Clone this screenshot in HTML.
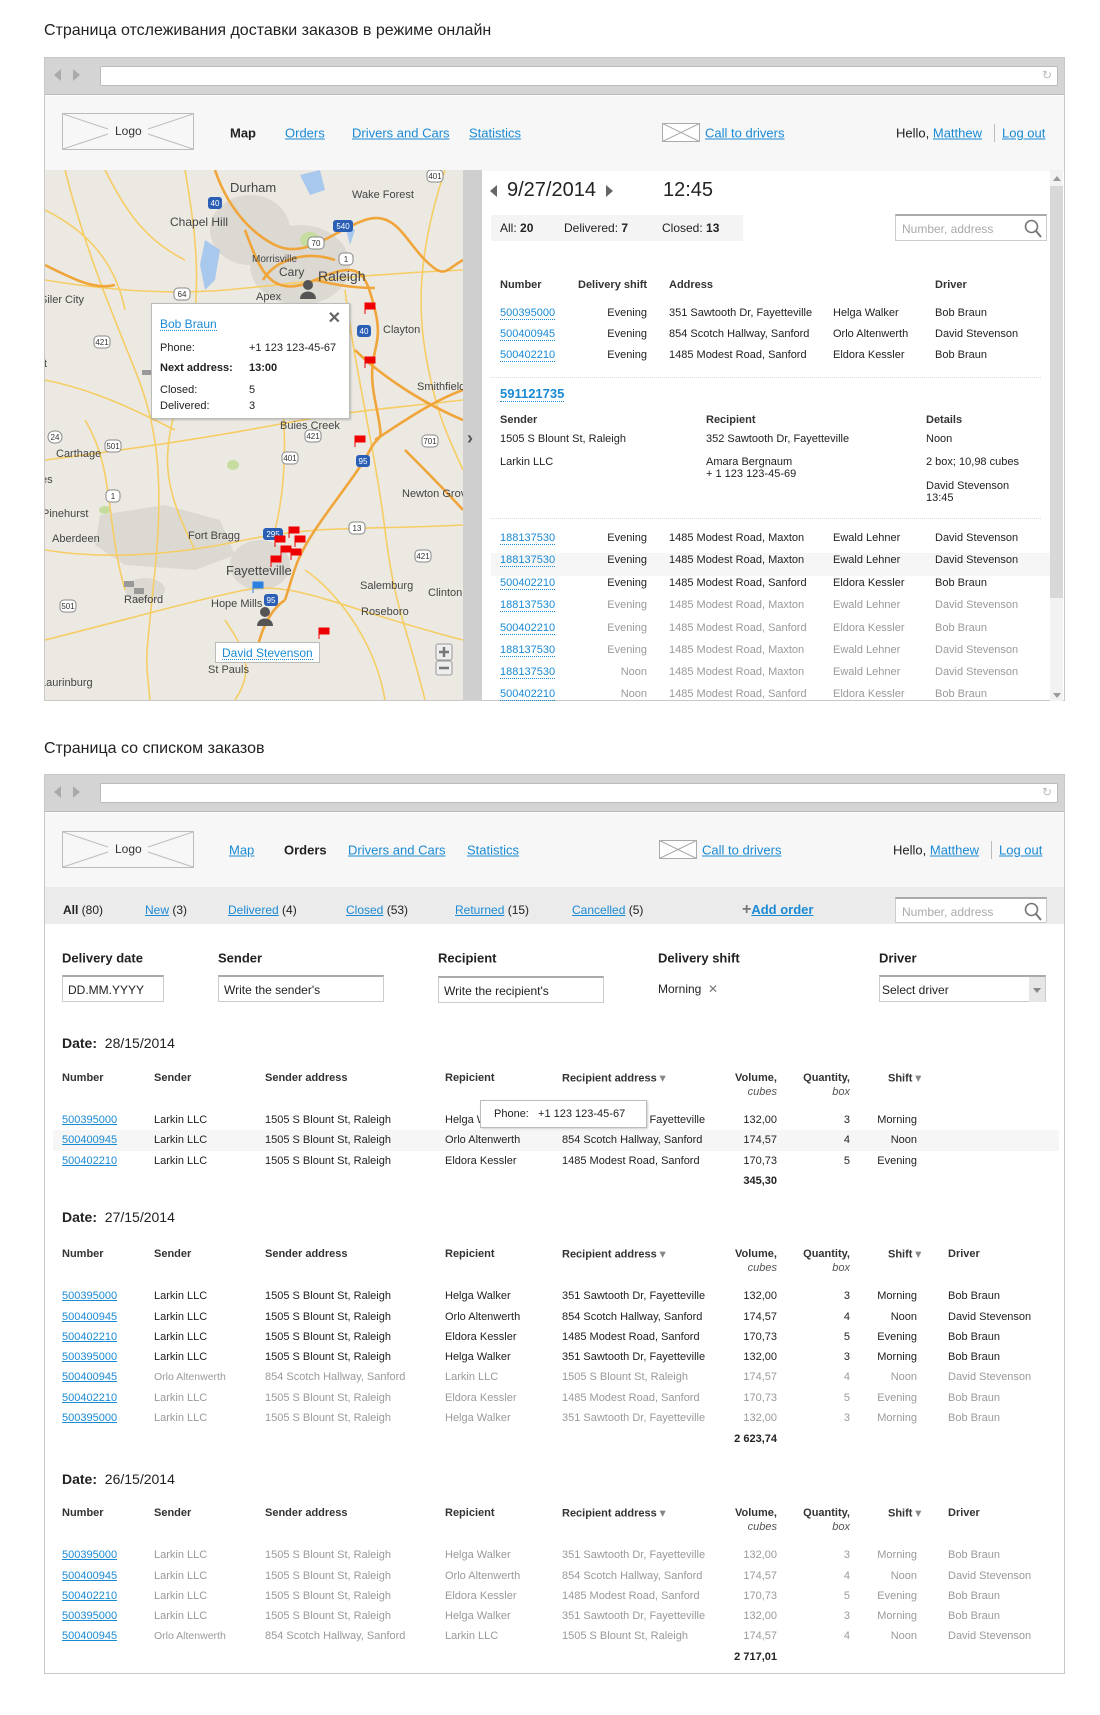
<!DOCTYPE html>
<html><head><meta charset="utf-8">
<style>
*{margin:0;padding:0;box-sizing:border-box}
body{width:1100px;height:1715px;background:#fff;font-family:"Liberation Sans","Noto Sans CJK SC",sans-serif;color:#222;position:relative;overflow:hidden;font-size:12px}
.a{position:absolute;white-space:nowrap}
a,.lk{color:#1a8ad4;text-decoration:underline}
.dl{color:#1a8ad4;text-decoration:none;border-bottom:1px dotted #1a8ad4;line-height:12px}
.frame{position:absolute;left:44px;width:1021px;border:1px solid #c8c8c8;background:#fff}
.tb{position:absolute;left:0;top:0;right:0;height:37px;background:#d4d4d4;border-bottom:1px solid #bbb}
.url{position:absolute;left:55px;right:6px;top:8px;height:20px;background:#fff;border:1px solid #bbb;border-radius:2px}
.hdr{position:absolute;left:0;right:0;background:#f7f7f7}
.logo{position:absolute;width:132px;height:37px;border:1px solid #bbb;background:#f7f7f7}
.nav{font-size:13px;transform:translateY(-50%)}
.g{color:#9a9a9a}
.b{font-weight:bold}
.h{font-weight:bold;font-size:11px;color:#333}
.r{text-align:right}
.mid{transform:translateY(-50%)}
</style></head><body>

<div class="a" style="left:44px;top:22px;font-size:16px">Страница отслеживания доставки заказов в режиме онлайн</div>

<div class="frame" style="top:57px;height:644px">
  <div class="tb"><div class="a" style="left:9px;top:11px;width:0;height:0;border:6px solid transparent;border-right:7px solid #aaa;border-left:0"></div><div class="a" style="left:28px;top:11px;width:0;height:0;border:6px solid transparent;border-left:7px solid #aaa;border-right:0"></div><div class="url"><span class="a" style="right:5px;top:1px;color:#bbb;font-size:12px">↻</span></div></div>
  <div class="hdr" style="top:38px;height:75px"></div>
</div>
<div class="logo" style="left:62px;top:113px">
<svg width="130" height="35" style="position:absolute;left:0;top:0"><path d="M0 0L45 15M130 0L85 15M0 35L45 20M130 35L85 20" stroke="#bbb" fill="none"/></svg>
<span class="a" style="left:52px;top:10px;font-size:12px;color:#333">Logo</span></div>
<div class="a nav b" style="left:230px;top:133px">Map</div>
<div class="a nav lk" style="left:285px;top:133px">Orders</div>
<div class="a nav lk" style="left:352px;top:133px">Drivers and Cars</div>
<div class="a nav lk" style="left:469px;top:133px">Statistics</div>
<svg class="a" style="left:662px;top:123px" width="38" height="19"><rect x=".5" y=".5" width="37" height="18" fill="#fff" stroke="#aaa"/><path d="M.5 .5L37.5 18.5M37.5 .5L.5 18.5" stroke="#aaa"/></svg>
<div class="a nav lk" style="left:705px;top:133px">Call to drivers</div>
<div class="a nav" style="left:896px;top:133px">Hello, <span class="lk">Matthew</span></div>
<div class="a" style="left:994px;top:124px;width:1px;height:18px;background:#bbb"></div>
<div class="a nav lk" style="left:1002px;top:133px">Log out</div>

<div class="a" style="left:45px;top:170px;width:418px;height:530px;overflow:hidden;background:#ece9e2">
<svg width="418" height="530" viewBox="0 0 418 530">
<g fill="#dcd9d2"><ellipse cx="205" cy="60" rx="40" ry="35"/><ellipse cx="255" cy="95" rx="50" ry="40"/><path d="M55 345L120 335L175 350L190 385L150 400L80 395L50 375Z"/><ellipse cx="215" cy="395" rx="30" ry="25"/><ellipse cx="100" cy="420" rx="20" ry="12"/></g>
<g fill="#c6dd9f"><ellipse cx="265" cy="70" rx="10" ry="8"/><ellipse cx="188" cy="295" rx="6" ry="5"/><ellipse cx="60" cy="340" rx="6" ry="4"/></g>
<g fill="#a9c8ee"><path d="M160 70L175 80L170 110L160 120L155 95Z"/><path d="M255 5L275 0L280 20L265 25Z"/><path d="M300 55L310 60L305 75Z"/></g>
<g fill="none" stroke="#f5cd64" stroke-width="1.6">
<path d="M0 110C60 120 120 125 180 120S300 105 418 100"/><path d="M20 0C40 80 70 150 90 200S120 300 110 400S100 480 105 530"/><path d="M0 290C80 280 150 270 230 255S330 240 418 230"/><path d="M140 0C150 60 160 120 140 200S110 300 150 380"/><path d="M0 380C60 390 130 385 200 370S320 360 418 355"/><path d="M0 470C80 450 150 430 200 420S300 440 418 470"/><path d="M300 120C310 200 330 280 340 360S360 450 380 530"/><path d="M230 180C240 230 245 300 230 360"/><path d="M60 0C80 40 100 70 140 90"/><path d="M400 0C380 60 370 120 380 180S400 260 418 300"/><path d="M180 450C200 480 210 500 190 530"/><path d="M0 210C50 220 90 240 130 260"/><path d="M0 40C40 60 70 90 80 140"/><path d="M160 200C200 210 240 220 280 200"/><path d="M40 250C70 300 60 350 80 420"/><path d="M260 400C290 420 330 470 340 530"/></g>
<g fill="none" stroke="#f0a53a" stroke-width="2.6">
<path d="M170 0C180 30 200 60 230 75S290 60 320 50S360 70 380 90S400 100 418 90"/><path d="M200 60C215 100 225 130 270 110S320 100 330 140S320 180 330 230S335 260 325 280S290 330 270 360S250 400 240 430"/><path d="M330 270C360 250 390 230 418 220"/><path d="M218 110C230 90 260 80 290 90"/><path d="M270 110C290 115 310 118 330 118"/><path d="M0 95C30 110 50 120 70 115"/><path d="M240 430C225 440 215 460 210 490"/><path d="M360 280C380 300 400 320 418 340"/><path d="M310 180C330 200 370 230 418 250"/><path d="M180 140C195 150 215 160 240 160"/></g>
<g font-family="Liberation Sans,sans-serif" fill="#444" font-size="11">
<text x="185" y="22" font-size="13">Durham</text><text x="307" y="28">Wake Forest</text><text x="125" y="56" font-size="12">Chapel Hill</text><text x="207" y="92" font-size="10">Morrisville</text><text x="234" y="106" font-size="12">Cary</text><text x="273" y="111" font-size="14">Raleigh</text><text x="211" y="130">Apex</text><text x="-5" y="133">Siler City</text><text x="338" y="163">Clayton</text><text x="372" y="220">Smithfield</text><text x="235" y="259">Buies Creek</text><text x="11" y="287">Carthage</text><text x="357" y="327">Newton Grove</text><text x="-3" y="347">Pinehurst</text><text x="7" y="372">Aberdeen</text><text x="143" y="369">Fort Bragg</text><text x="181" y="405" font-size="13">Fayetteville</text><text x="315" y="419">Salemburg</text><text x="383" y="426">Clinton</text><text x="79" y="433">Raeford</text><text x="166" y="437">Hope Mills</text><text x="316" y="445">Roseboro</text><text x="163" y="503">St Pauls</text><text x="-5" y="516">Laurinburg</text><text x="-4" y="313">es</text><text x="-4" y="197">tt</text>
</g>
<g font-family="Liberation Sans,sans-serif" font-size="8" text-anchor="middle">
<g fill="#fff" stroke="#888"><rect x="129" y="118" width="16" height="12" rx="4"/><rect x="49" y="166" width="16" height="12" rx="4"/><rect x="3" y="261" width="14" height="12" rx="6"/><rect x="60" y="270" width="16" height="12" rx="4"/><rect x="260" y="260" width="16" height="12" rx="4"/><rect x="237" y="282" width="16" height="12" rx="4"/><rect x="377" y="265" width="16" height="12" rx="4"/><rect x="61" y="320" width="14" height="12" rx="4"/><rect x="304" y="352" width="16" height="12" rx="4"/><rect x="370" y="380" width="16" height="12" rx="4"/><rect x="15" y="430" width="16" height="12" rx="4"/><rect x="382" y="0" width="16" height="12" rx="4"/><rect x="263" y="67" width="16" height="12" rx="4"/><rect x="294" y="83" width="14" height="12" rx="4"/></g>
<g fill="#333"><text x="137" y="127">64</text><text x="57" y="175">421</text><text x="10" y="270">24</text><text x="68" y="279">501</text><text x="268" y="269">421</text><text x="245" y="291">401</text><text x="385" y="274">701</text><text x="68" y="329">1</text><text x="312" y="361">13</text><text x="378" y="389">421</text><text x="23" y="439">501</text><text x="390" y="9">401</text><text x="271" y="76">70</text><text x="301" y="92">1</text></g>
<g fill="#2a5fb5"><rect x="163" y="27" width="14" height="12" rx="3"/><rect x="288" y="50" width="20" height="12" rx="3"/><rect x="312" y="155" width="14" height="12" rx="3"/><rect x="311" y="285" width="14" height="12" rx="3"/><rect x="218" y="358" width="20" height="12" rx="3"/><rect x="219" y="424" width="14" height="12" rx="3"/></g>
<g fill="#fff"><text x="170" y="36">40</text><text x="298" y="59">540</text><text x="319" y="164">40</text><text x="318" y="294">95</text><text x="228" y="367">295</text><text x="226" y="433">95</text></g></g>
<g fill="#e00" stroke="#e00" stroke-width="1"><path d="M320 133h10v6h-10zM320 133v11"/><path d="M320 187h10v6h-10zM320 187v11"/><path d="M310 266h10v6h-10zM310 266v11"/><path d="M244 357h10v6h-10zM244 357v11"/><path d="M230 366h10v6h-10zM230 366v11"/><path d="M250 366h10v6h-10zM250 366v11"/><path d="M236 376h10v6h-10zM236 376v11"/><path d="M246 379h10v6h-10zM246 379v11"/><path d="M226 386h10v6h-10zM226 386v11"/><path d="M274 458h10v6h-10zM274 458v11"/></g>
<path d="M208 412h10v6h-10zM208 412v11" fill="#2a7fe0" stroke="#2a7fe0"/>
<g fill="#999"><rect x="97" y="200" width="10" height="5"/><rect x="79" y="411" width="10" height="6"/><rect x="89" y="418" width="10" height="6"/></g>
<g fill="#555"><circle cx="263" cy="115" r="5"/><path d="M255 129c0-10 16-10 16 0z"/><circle cx="220" cy="442" r="5"/><path d="M212 456c0-10 16-10 16 0z"/></g>
<g fill="#eee" stroke="#999"><rect x="391" y="474" width="16" height="16" rx="2"/><rect x="391" y="491" width="16" height="14" rx="2"/></g>
<path d="M399 477v10M394 482h10M394 498h10" stroke="#777" stroke-width="2.5"/>
</svg>
</div>
<div class="a" style="left:151px;top:303px;width:199px;height:116px;background:#fff;border:1px solid #bbb;box-shadow:1px 1px 2px rgba(0,0,0,.2);font-size:11px">
<span class="a dl" style="left:8px;top:14px;font-size:12px">Bob Braun</span>
<span class="a" style="right:8px;top:4px;font-size:16px;color:#666;font-weight:bold">✕</span>
<span class="a" style="left:8px;top:38px">Phone:</span><span class="a" style="left:97px;top:38px">+1 123 123-45-67</span>
<span class="a b" style="left:8px;top:58px">Next address:</span><span class="a b" style="left:97px;top:58px">13:00</span>
<span class="a" style="left:8px;top:80px">Closed:</span><span class="a" style="left:97px;top:80px">5</span>
<span class="a" style="left:8px;top:96px">Delivered:</span><span class="a" style="left:97px;top:96px">3</span>
</div>
<div class="a" style="left:215px;top:642px;width:105px;height:21px;background:#fff;border:1px solid #bbb"><span class="a dl" style="left:6px;top:4px;font-size:12px">David Stevenson</span></div>
<div class="a" style="left:463px;top:170px;width:19px;height:531px;background:#cfcfcf"></div>
<div class="a" style="left:467px;top:428px;font-size:18px;color:#555;font-weight:bold">›</div>
<div class="a" style="left:1050px;top:170px;width:13px;height:531px;background:#f2f2f2"></div>
<div class="a" style="left:1050px;top:186px;width:13px;height:412px;background:#d8d8d8"></div>
<div class="a" style="left:1053px;top:176px;border:4px solid transparent;border-bottom:5px solid #999;border-top:0"></div>
<div class="a" style="left:1053px;top:693px;border:4px solid transparent;border-top:5px solid #999;border-bottom:0"></div>

<div class="a" style="left:490px;top:185px;border:6px solid transparent;border-right:7px solid #666;border-left:0"></div>
<div class="a" style="left:507px;top:179px;font-size:20px">9/27/2014</div>
<div class="a" style="left:606px;top:185px;border:6px solid transparent;border-left:7px solid #666;border-right:0"></div>
<div class="a" style="left:663px;top:179px;font-size:20px">12:45</div>
<div class="a" style="left:491px;top:215px;width:252px;height:26px;background:#f4f4f4"></div>
<div class="a" style="left:500px;top:221px;font-size:12px">All: <b>20</b></div>
<div class="a" style="left:564px;top:221px;font-size:12px">Delivered: <b>7</b></div>
<div class="a" style="left:662px;top:221px;font-size:12px">Closed: <b>13</b></div>
<div class="a" style="left:895px;top:214px;width:152px;height:27px;border:1px solid #ccc;border-top:2px solid #aaa;background:#fff"><span class="a" style="left:6px;top:6px;font-size:12px;color:#aaa">Number, address</span><svg class="a" style="right:4px;top:3px" width="18" height="19"><circle cx="7.5" cy="7.5" r="6" stroke="#777" stroke-width="1.6" fill="none"/><path d="M12 12l5 6" stroke="#777" stroke-width="2"/></svg></div>

<div class="a h" style="left:500px;top:279px">Number</div><div class="a h" style="left:578px;top:279px">Delivery shift</div><div class="a h" style="left:669px;top:279px">Address</div><div class="a h" style="left:935px;top:279px">Driver</div>
<div id="tp"></div>
<div class="a" style="left:491px;top:377px;width:550px;border-top:1px dotted #ddd"></div>
<div class="a dl b" style="left:500px;top:387px;font-size:13px;line-height:14px">591121735</div>
<div class="a h" style="left:500px;top:414px">Sender</div><div class="a h" style="left:706px;top:414px">Recipient</div><div class="a h" style="left:926px;top:414px">Details</div>
<div class="a" style="left:500px;top:433px;font-size:11px">1505 S Blount St, Raleigh</div><div class="a" style="left:706px;top:433px;font-size:11px">352 Sawtooth Dr, Fayetteville</div><div class="a" style="left:926px;top:433px;font-size:11px">Noon</div>
<div class="a" style="left:500px;top:456px;font-size:11px">Larkin LLC</div><div class="a" style="left:706px;top:456px;font-size:11px;line-height:12px">Amara Bergnaum<br>+ 1 123 123-45-69</div><div class="a" style="left:926px;top:456px;font-size:11px">2 box; 10,98 cubes</div>
<div class="a" style="left:926px;top:480px;font-size:11px;line-height:12px">David Stevenson<br>13:45</div>
<div class="a" style="left:491px;top:518px;width:550px;border-top:1px dotted #ddd"></div>
<div class="a" style="left:491px;top:553px;width:559px;height:23px;background:#f6f6f6"></div>
<div id="tp2"></div>

<div class="a" style="left:44px;top:740px;font-size:16px">Страница со списком заказов</div>

<div class="frame" style="top:774px;height:900px">
  <div class="tb"><div class="a" style="left:9px;top:11px;width:0;height:0;border:6px solid transparent;border-right:7px solid #aaa;border-left:0"></div><div class="a" style="left:28px;top:11px;width:0;height:0;border:6px solid transparent;border-left:7px solid #aaa;border-right:0"></div><div class="url"><span class="a" style="right:5px;top:1px;color:#bbb;font-size:12px">↻</span></div></div>
  <div class="hdr" style="top:38px;height:74px"></div>
  <div class="hdr" style="top:112px;height:37px;background:#ebebeb"></div>
</div>
<div class="logo" style="left:62px;top:831px">
<svg width="130" height="35" style="position:absolute;left:0;top:0"><path d="M0 0L45 15M130 0L85 15M0 35L45 20M130 35L85 20" stroke="#bbb" fill="none"/></svg>
<span class="a" style="left:52px;top:10px;font-size:12px;color:#333">Logo</span></div>
<div class="a nav lk" style="left:229px;top:850px">Map</div>
<div class="a nav b" style="left:284px;top:850px">Orders</div>
<div class="a nav lk" style="left:348px;top:850px">Drivers and Cars</div>
<div class="a nav lk" style="left:467px;top:850px">Statistics</div>
<svg class="a" style="left:659px;top:840px" width="38" height="19"><rect x=".5" y=".5" width="37" height="18" fill="#fff" stroke="#aaa"/><path d="M.5 .5L37.5 18.5M37.5 .5L.5 18.5" stroke="#aaa"/></svg>
<div class="a nav lk" style="left:702px;top:850px">Call to drivers</div>
<div class="a nav" style="left:893px;top:850px">Hello, <span class="lk">Matthew</span></div>
<div class="a" style="left:991px;top:841px;width:1px;height:18px;background:#bbb"></div>
<div class="a nav lk" style="left:999px;top:850px">Log out</div>

<div class="a mid" style="left:63px;top:910px;font-size:12px"><b>All</b> (80)</div>
<div class="a mid" style="left:145px;top:910px;font-size:12px"><span class="lk">New</span> (3)</div>
<div class="a mid" style="left:228px;top:910px;font-size:12px"><span class="lk">Delivered</span> (4)</div>
<div class="a mid" style="left:346px;top:910px;font-size:12px"><span class="lk">Closed</span> (53)</div>
<div class="a mid" style="left:455px;top:910px;font-size:12px"><span class="lk">Returned</span> (15)</div>
<div class="a mid" style="left:572px;top:910px;font-size:12px"><span class="lk">Cancelled</span> (5)</div>
<div class="a mid" style="left:742px;top:910px;font-size:13px"><b style="color:#777;font-size:16px">+</b><b class="lk">Add order</b></div>
<div class="a" style="left:895px;top:897px;width:152px;height:26px;border:1px solid #ccc;border-top:2px solid #aaa;background:#fff"><span class="a" style="left:6px;top:6px;font-size:12px;color:#aaa">Number, address</span><svg class="a" style="right:4px;top:3px" width="18" height="19"><circle cx="7.5" cy="7.5" r="6" stroke="#777" stroke-width="1.6" fill="none"/><path d="M12 12l5 6" stroke="#777" stroke-width="2"/></svg></div>

<div class="a b mid" style="left:62px;top:958px;font-size:13px">Delivery date</div>
<div class="a b mid" style="left:218px;top:958px;font-size:13px">Sender</div>
<div class="a b mid" style="left:438px;top:958px;font-size:13px">Recipient</div>
<div class="a b mid" style="left:658px;top:958px;font-size:13px">Delivery shift</div>
<div class="a b mid" style="left:879px;top:958px;font-size:13px">Driver</div>
<div class="a" style="left:62px;top:975px;width:102px;height:27px;border:1px solid #ccc;border-top:2px solid #aaa"><span class="a" style="left:5px;top:6px">DD.MM.YYYY</span></div>
<div class="a" style="left:218px;top:975px;width:166px;height:27px;border:1px solid #ccc;border-top:2px solid #aaa"><span class="a" style="left:5px;top:6px">Write the sender's</span></div>
<div class="a" style="left:438px;top:976px;width:166px;height:27px;border:1px solid #ccc;border-top:2px solid #aaa"><span class="a" style="left:5px;top:6px">Write the recipient's</span></div>
<div class="a mid" style="left:658px;top:989px">Morning &nbsp;<span style="color:#777">✕</span></div>
<div class="a" style="left:879px;top:975px;width:167px;height:27px;border:1px solid #ccc;border-top:2px solid #aaa"><span class="a" style="left:2px;top:6px">Select driver</span><div class="a" style="right:0;top:0;width:16px;height:25px;background:#e6e6e6"></div><div class="a" style="right:4px;top:11px;border:4px solid transparent;border-top:5px solid #888;border-bottom:0"></div></div>

<div id="tables"></div>
<div class="a" style="left:480px;top:1100px;width:167px;height:28px;background:#fff;border:1px solid #bbb;box-shadow:1px 1px 2px rgba(0,0,0,.2)"><span class="a" style="left:13px;top:7px;font-size:11px">Phone: &nbsp; +1 123 123-45-67</span></div>

<script>
function row(y,cells,cls){let s='';cells.forEach(c=>{s+=`<div class="a mid ${c[2]||''} ${cls||''}" style="left:${c[0]}px;top:${y}px;font-size:11px;${c[3]||''}">${c[1]}</div>`});return s}
let h='';
const top1=[['500395000','Evening','351 Sawtooth Dr, Fayetteville','Helga Walker','Bob Braun'],['500400945','Evening','854 Scotch Hallway, Sanford','Orlo Altenwerth','David Stevenson'],['500402210','Evening','1485 Modest Road, Sanford','Eldora Kessler','Bob Braun']];
[313,334,355].forEach((y,i)=>{const r=top1[i];h+=row(y,[[500,`<span class="dl">${r[0]}</span>`],[597,r[1],'r','width:50px'],[669,r[2]],[833,r[3]],[935,r[4]]])});
document.getElementById('tp').outerHTML=h;h='';
const t2=[['188137530','Evening','1485 Modest Road, Maxton','Ewald Lehner','David Stevenson'],['188137530','Evening','1485 Modest Road, Maxton','Ewald Lehner','David Stevenson'],['500402210','Evening','1485 Modest Road, Sanford','Eldora Kessler','Bob Braun'],['188137530','Evening','1485 Modest Road, Maxton','Ewald Lehner','David Stevenson'],['500402210','Evening','1485 Modest Road, Sanford','Eldora Kessler','Bob Braun'],['188137530','Evening','1485 Modest Road, Maxton','Ewald Lehner','David Stevenson'],['188137530','Noon','1485 Modest Road, Maxton','Ewald Lehner','David Stevenson'],['500402210','Noon','1485 Modest Road, Sanford','Eldora Kessler','Bob Braun']];
[538,560,583,605,628,650,672,694].forEach((y,i)=>{const r=t2[i];const g=i>2?'g':'';h+=row(y,[[500,`<span class="dl">${r[0]}</span>`],[597,r[1],'r '+g,'width:50px'],[669,r[2],g],[833,r[3],g],[935,r[4],g]])});
h+='<div class="a" style="left:484px;top:701px;width:590px;height:20px;background:#fff"></div>';
document.getElementById('tp2').outerHTML=h;h='';

const R={a:['500395000','Larkin LLC','1505 S Blount St, Raleigh','Helga Walker','351 Sawtooth Dr, Fayetteville','132,00','3','Morning','Bob Braun'],
b:['500400945','Larkin LLC','1505 S Blount St, Raleigh','Orlo Altenwerth','854 Scotch Hallway, Sanford','174,57','4','Noon','David Stevenson'],
c:['500402210','Larkin LLC','1505 S Blount St, Raleigh','Eldora Kessler','1485 Modest Road, Sanford','170,73','5','Evening','Bob Braun'],
d:['500400945','Orlo Altenwerth','854 Scotch Hallway, Sanford','Larkin LLC','1505 S Blount St, Raleigh','174,57','4','Noon','David Stevenson']};
function table(dy,date,hy,rows,ys,faded,tot,ty,driver){
 let s=`<div class="a mid" style="left:62px;top:${dy}px;font-size:14px"><b>Date:</b>&nbsp; ${date}</div>`;
 const hc=[[62,'Number'],[154,'Sender'],[265,'Sender address'],[445,'Repicient'],[562,'Recipient address <span style="color:#888">▾</span>']];
 hc.forEach(c=>s+=`<div class="a h mid" style="left:${c[0]}px;top:${hy}px">${c[1]}</div>`);
 s+=`<div class="a h r" style="left:697px;width:80px;top:${hy-7}px;line-height:14px">Volume,<br><i style="font-weight:normal;color:#555">cubes</i></div>`;
 s+=`<div class="a h r" style="left:770px;width:80px;top:${hy-7}px;line-height:14px">Quantity,<br><i style="font-weight:normal;color:#555">box</i></div>`;
 s+=`<div class="a h mid" style="left:888px;top:${hy}px">Shift <span style="color:#888">▾</span></div>`;
 if(driver) s+=`<div class="a h mid" style="left:948px;top:${hy}px">Driver</div>`;
 rows.forEach((k,i)=>{const r=R[k];const g=faded(i)?'g':'';
  s+=row(ys[i],[[62,`<span class="lk">${r[0]}</span>`],[154,r[1],g,r[1].length>12?'font-size:10.5px':''],[265,r[2],g],[445,r[3],g],[562,r[4],g],[717,r[5],'r '+g,'width:60px'],[810,r[6],'r '+g,'width:40px'],[861,r[7],'r '+g,'width:56px'],[948,driver?r[8]:'',g]]);});
 s+=`<div class="a b mid r" style="left:697px;width:80px;top:${ty}px;font-size:11px">${tot}</div>`;
 return s}
h+='<div class="a" style="left:53px;top:1130px;width:1006px;height:21px;background:#f6f6f6"></div>';
h+=table(1043,'28/15/2014',1078,['a','b','c'],[1120,1140,1161],()=>false,'345,30',1181,false);
h+=table(1217,'27/15/2014',1254,['a','b','c','a','d','c','a'],[1296,1317,1337,1357,1377,1398,1418],i=>i>3,'2 623,74',1439,true);
h+=table(1479,'26/15/2014',1513,['a','b','c','a','d'],[1555,1576,1596,1616,1636],()=>true,'2 717,01',1657,true);
document.getElementById('tables').outerHTML=h;
</script>
</body></html>
